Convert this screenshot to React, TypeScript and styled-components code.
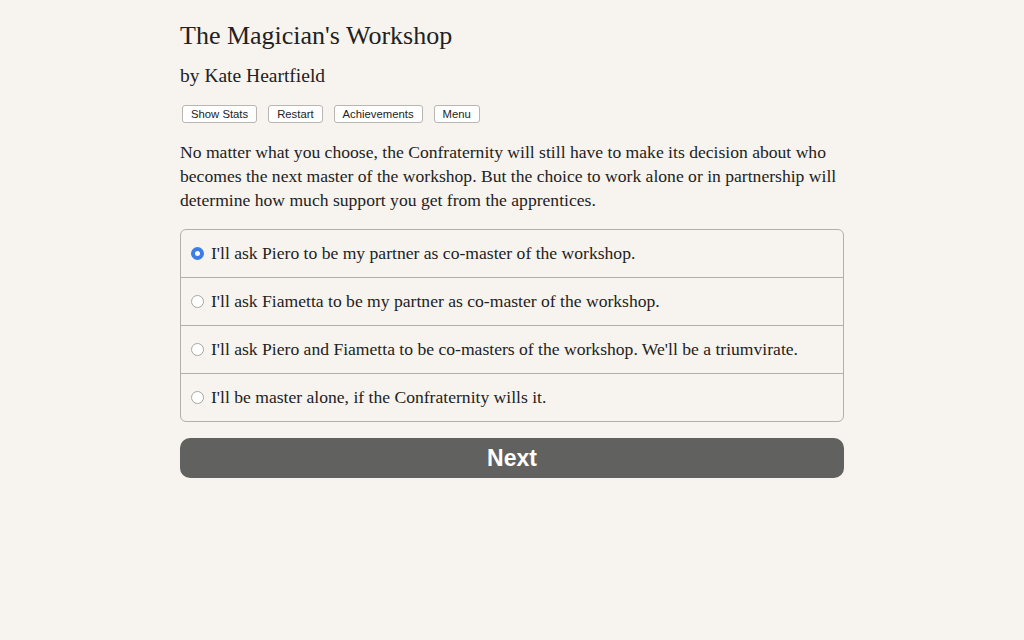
import React, { useState } from "react";
import styled, { createGlobalStyle } from "styled-components";

const GlobalStyle = createGlobalStyle`
  html, body {
    margin: 0;
    padding: 0;
    background: #f7f4ef;
  }
  body {
    font-family: "Palatino Linotype", "Book Antiqua", Palatino, "Liberation Serif", serif;
    color: #222222;
  }
`;

const Page = styled.div`
  width: 664px;
  margin: 0 auto;
  padding-top: 18px;
  padding-bottom: 40px;
`;

const Title = styled.h1`
  margin: 0;
  font-size: 26px;
  font-weight: 400;
  line-height: 36px;
  color: #222;
`;

const Author = styled.h2`
  margin: 8px 0 0;
  font-size: 19.5px;
  font-weight: 400;
  line-height: 28px;
  color: #222;
`;

const Toolbar = styled.div`
  display: flex;
  gap: 11px;
  margin: 15px 0 0 2px;
`;

const ToolButton = styled.button`
  font-family: "Liberation Sans", Arial, sans-serif;
  font-size: 11.3px;
  color: #222;
  background: #fff;
  border: 1px solid #b9b6b1;
  border-radius: 3px;
  height: 18px;
  padding: 0 8px;
  line-height: 16px;
  cursor: pointer;
`;

const Prose = styled.p`
  margin: 17px 0 0;
  font-size: 17.6px;
  line-height: 24px;
`;

const Choices = styled.div`
  margin-top: 17px;
  border: 1px solid #b3b0ab;
  border-radius: 6px;
  overflow: hidden;
`;

const ChoiceRow = styled.label`
  display: flex;
  align-items: center;
  height: 47px;
  padding-left: 10px;
  font-size: 17.6px;
  cursor: pointer;
  & + & {
    border-top: 1px solid #b3b0ab;
  }
`;

const Radio = styled.span<{ $checked: boolean }>`
  width: 13px;
  height: 13px;
  box-sizing: border-box;
  border-radius: 50%;
  margin-right: 7px;
  flex-shrink: 0;
  background: #fff;
  border: ${(p) => (p.$checked ? "4px solid #3d7ee6" : "1px solid #a9a6a2")};
`;

const NextButton = styled.button`
  display: block;
  width: 100%;
  margin-top: 16px;
  height: 40px;
  border: none;
  border-radius: 10px;
  background: #616160;
  color: #fff;
  font-family: "Liberation Sans", Arial, sans-serif;
  font-weight: 700;
  font-size: 23px;
  cursor: pointer;
`;

const options = [
  "I'll ask Piero to be my partner as co-master of the workshop.",
  "I'll ask Fiametta to be my partner as co-master of the workshop.",
  "I'll ask Piero and Fiametta to be co-masters of the workshop. We'll be a triumvirate.",
  "I'll be master alone, if the Confraternity wills it.",
];

export default function App() {
  const [choice, setChoice] = useState(0);

  return (
    <>
      <GlobalStyle />
      <Page>
        <Title>The Magician's Workshop</Title>
        <Author>by Kate Heartfield</Author>
        <Toolbar>
          <ToolButton>Show Stats</ToolButton>
          <ToolButton>Restart</ToolButton>
          <ToolButton>Achievements</ToolButton>
          <ToolButton>Menu</ToolButton>
        </Toolbar>
        <Prose>
          No matter what you choose, the Confraternity will still have to make
          its decision about who becomes the next master of the workshop. But
          the choice to work alone or in partnership will determine how much
          support you get from the apprentices.
        </Prose>
        <Choices>
          {options.map((text, i) => (
            <ChoiceRow key={i} onClick={() => setChoice(i)}>
              <Radio $checked={choice === i} />
              {text}
            </ChoiceRow>
          ))}
        </Choices>
        <NextButton>Next</NextButton>
      </Page>
    </>
  );
}
